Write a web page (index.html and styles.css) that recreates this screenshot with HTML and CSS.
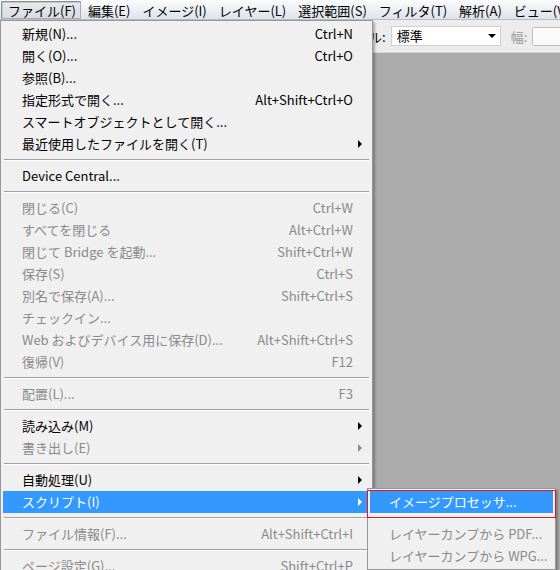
FILE: index.html
```html
<!DOCTYPE html>
<html lang="ja">
<head>
<meta charset="utf-8">
<link rel="stylesheet" href="styles.css">
</head>
<body>
<div class="app">
  <div class="menubar">
    <span class="mb-item pressed">ファイル(F)</span>
    <span class="mb-item">編集(E)</span>
    <span class="mb-item">イメージ(I)</span>
    <span class="mb-item">レイヤー(L)</span>
    <span class="mb-item">選択範囲(S)</span>
    <span class="mb-item">フィルタ(T)</span>
    <span class="mb-item">解析(A)</span>
    <span class="mb-item">ビュー(V)</span>
  </div>
  <div class="toolbar">
    <span class="tb-label">スタイル:</span>
    <div class="select"><span>標準</span><span class="sel-arrow"></span></div>
    <span class="tb-label dim">幅:</span>
    <div class="input"></div>
  </div>
  <div class="canvas"></div>

  <div class="menu main-menu">
    <div class="item"><span>新規(N)...</span><span class="key">Ctrl+N</span></div>
    <div class="item"><span>開く(O)...</span><span class="key">Ctrl+O</span></div>
    <div class="item"><span>参照(B)...</span><span class="key"></span></div>
    <div class="item"><span>指定形式で開く...</span><span class="key">Alt+Shift+Ctrl+O</span></div>
    <div class="item"><span>スマートオブジェクトとして開く...</span><span class="key"></span></div>
    <div class="item sub"><span>最近使用したファイルを開く(T)</span><span class="key"></span></div>
    <div class="sep"></div>
    <div class="item"><span>Device Central...</span><span class="key"></span></div>
    <div class="sep"></div>
    <div class="item dis"><span>閉じる(C)</span><span class="key">Ctrl+W</span></div>
    <div class="item dis"><span>すべてを閉じる</span><span class="key">Alt+Ctrl+W</span></div>
    <div class="item dis"><span>閉じて Bridge を起動...</span><span class="key">Shift+Ctrl+W</span></div>
    <div class="item dis"><span>保存(S)</span><span class="key">Ctrl+S</span></div>
    <div class="item dis"><span>別名で保存(A)...</span><span class="key">Shift+Ctrl+S</span></div>
    <div class="item dis"><span>チェックイン...</span><span class="key"></span></div>
    <div class="item dis"><span>Web およびデバイス用に保存(D)...</span><span class="key">Alt+Shift+Ctrl+S</span></div>
    <div class="item dis"><span>復帰(V)</span><span class="key">F12</span></div>
    <div class="sep"></div>
    <div class="item dis"><span>配置(L)...</span><span class="key">F3</span></div>
    <div class="sep"></div>
    <div class="item sub"><span>読み込み(M)</span><span class="key"></span></div>
    <div class="item sub dis"><span>書き出し(E)</span><span class="key"></span></div>
    <div class="sep"></div>
    <div class="item sub"><span>自動処理(U)</span><span class="key"></span></div>
    <div class="item sub hl"><span>スクリプト(I)</span><span class="key"></span></div>
    <div class="sep"></div>
    <div class="item dis"><span>ファイル情報(F)...</span><span class="key">Alt+Shift+Ctrl+I</span></div>
    <div class="sep"></div>
    <div class="item dis"><span>ページ設定(G)...</span><span class="key">Shift+Ctrl+P</span></div>
  </div>

  <div class="menu sub-menu">
    <div class="item hl"><span>イメージプロセッサ...</span></div>
    <div class="sep"></div>
    <div class="item dis"><span>レイヤーカンプから PDF...</span></div>
    <div class="item dis"><span>レイヤーカンプから WPG...</span></div>
  </div>

  <div class="mark"></div>
</div>
</body>
</html>
```

FILE: styles.css
```css
* { box-sizing: border-box; }
html, body {
  margin: 0;
  padding: 0;
  width: 560px;
  height: 570px;
  overflow: hidden;
}
body {
  font-family: "Noto Sans CJK JP", "Noto Sans", sans-serif;
  font-size: 13px;
  color: #000;
  background: #f0f0f0;
}
.app {
  position: relative;
  width: 560px;
  height: 570px;
  display: flex;
  flex-direction: column;
  overflow: hidden;
}
.menubar {
  height: 20px;
  display: flex;
  align-items: stretch;
  padding-left: 1px;
  background: linear-gradient(#fbfcfd, #e9edf2 60%, #dde3ea);
  border-bottom: 1px solid #b9bcc0;
}
.mb-item {
  padding: 0 4px 0 6px;
  line-height: 18px;
  margin-top: 1px;
  white-space: nowrap;
  border: 1px solid transparent;
}
.mb-item + .mb-item { margin-left: 0; }
.mb-item.pressed {
  border-color: #8e8f8f #a9abad #a9abad #8e8f8f;
  background: linear-gradient(#e6e9ed, #d9dde3);
  box-shadow: inset 1px 1px 0 #c4c7cb;
}
.toolbar {
  height: 33px;
  display: flex;
  align-items: center;
  padding-left: 330px;
  background: #ececec;
  border-bottom: 1px solid #d3d3d3;
  gap: 5px;
}
.tb-label { white-space: nowrap; }
.tb-label.dim { color: #9a9a9a; margin-left: 5px; }
.select {
  width: 110px;
  height: 20px;
  flex: none;
  background: #fff;
  border: 1px solid #d0d0d0;
  display: flex;
  align-items: center;
  justify-content: space-between;
  padding: 0 4px 0 5px;
  line-height: 18px;
}
.sel-arrow {
  width: 0;
  height: 0;
  border-left: 4px solid transparent;
  border-right: 4px solid transparent;
  border-top: 4px solid #000;
}
.input {
  width: 40px;
  height: 19px;
  flex: none;
  background: #fbfbfb;
  border: 1px solid #bdbdbd;
  border-radius: 2px;
}
.canvas {
  flex: 1;
  background: #ababab;
}

.menu {
  position: absolute;
  background: #f0f0f0;
  border: 1px solid #979797;
  padding: 2px;
  box-shadow: 2px 2px 2px rgba(0,0,0,0.28);
}
.main-menu {
  left: 0;
  top: 20px;
  width: 373px;
}
.sub-menu {
  left: 367px;
  top: 488px;
  width: 189px;
}
.item {
  position: relative;
  height: 22px;
  line-height: 22px;
  display: flex;
  justify-content: space-between;
  padding: 0 17px 0 19px;
  white-space: nowrap;
}
.sub-menu .item { padding-left: 19px; }
.item.dis { color: #8a8a8a; }
.item.hl { background: #3399ff; color: #fff; }
.item.sub::after {
  content: "";
  position: absolute;
  right: 8px;
  top: 7px;
  width: 0;
  height: 0;
  border-top: 4px solid transparent;
  border-bottom: 4px solid transparent;
  border-left: 4px solid #000;
}
.item.sub.dis::after { border-left-color: #8a8a8a; }
.item.sub.hl::after { border-left-color: #fff; }
.sep {
  height: 10px;
  margin: 0 1px;
  display: flex;
  flex-direction: column;
  justify-content: center;
}
.sep::before {
  content: "";
  display: block;
  height: 1px;
  background: #a0a0a0;
  border-bottom: 1px solid #fff;
  box-sizing: content-box;
}
.mark {
  position: absolute;
  left: 367px;
  top: 490px;
  width: 189px;
  height: 28px;
  border: 1px solid #e8141c;
}
```
